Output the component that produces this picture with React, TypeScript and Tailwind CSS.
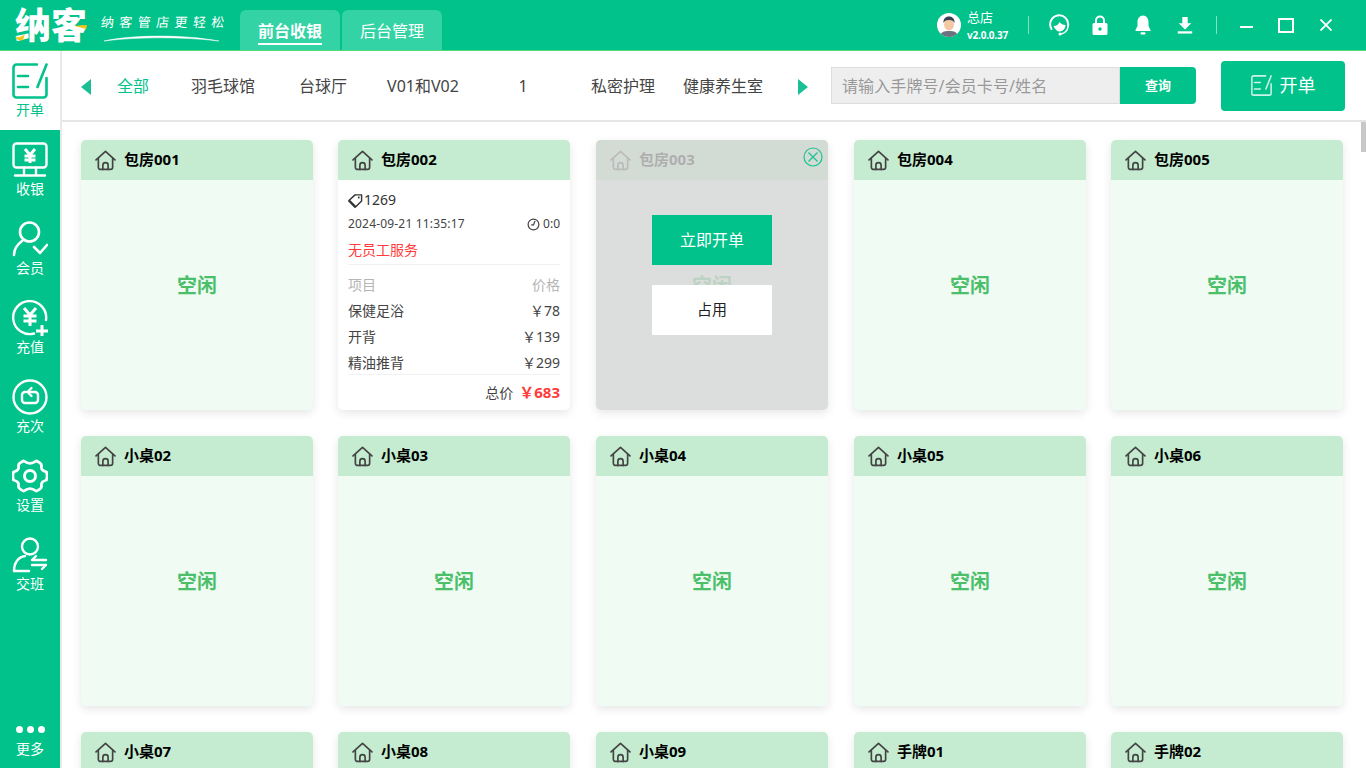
import React from "react";

const FONT = "font-['Noto_Sans','Noto_Sans_CJK_SC',sans-serif]";

function EditIcon({ className }: { className?: string }) {
  return (
    <svg viewBox="0 0 36 36" className={className} fill="none" stroke="currentColor" strokeWidth="2.6" strokeLinecap="round" strokeLinejoin="round">
      <path d="M25 1.500H4.500a3 3 0 0 0-3 3v27a3 3 0 0 0 3 3h27a3 3 0 0 0 3-3V15" />
      <path d="M34.500 1.500L25.500 24" />
      <path d="M6 13h10M6 24h10" />
    </svg>
  );
}

function Monitor() {
  return (
    <svg viewBox="0 0 36 36" className="w-[36px] h-[36px]" fill="none" stroke="white" strokeWidth="2.400" strokeLinecap="round" strokeLinejoin="round">
      <rect x="1.500" y="1.500" width="33" height="24" rx="3" />
      <path d="M12 25.500v7M24 25.500v7M3 33.500h30" />
      <path d="M13 7l5 6 5-6M12.500 14h11M12.500 18h11M18 13v8" strokeWidth="3" strokeLinecap="butt" strokeLinejoin="miter" />
    </svg>
  );
}

function Member() {
  return (
    <svg viewBox="0 0 36 36" className="w-[36px] h-[36px]" fill="none" stroke="white" strokeWidth="2.600" strokeLinecap="round" strokeLinejoin="round">
      <circle cx="17.500" cy="11" r="9.500" />
      <path d="M2 34c0-7 4-11 8-14" />
      <path d="M22 26l6 6 7-8" />
    </svg>
  );
}

function Recharge() {
  return (
    <svg viewBox="0 0 36 36" className="w-[36px] h-[36px]" fill="none" stroke="white" strokeWidth="2.400" strokeLinecap="round" strokeLinejoin="round">
      <path d="M22 33.500A16.500 16.500 0 1 1 34 20" />
      <path d="M12 8l6 7 6-7M11.500 16h13M11.500 21h13M18 15v11" strokeWidth="3" strokeLinecap="butt" strokeLinejoin="miter" />
      <path d="M24 31h12M30 25v11" strokeWidth="3" strokeLinecap="butt" />
    </svg>
  );
}

function Recount() {
  return (
    <svg viewBox="0 0 36 36" className="w-[36px] h-[36px]" fill="none" stroke="white" strokeWidth="2.400" strokeLinecap="round" strokeLinejoin="round">
      <circle cx="18" cy="18" r="16.500" />
      <path d="M14 13h-1a3 3 0 0 0-3 3v5a3 3 0 0 0 3 3h10a3 3 0 0 0 3-3v-5a3 3 0 0 0-3-3h-5" />
      <path d="M19.500 9l-4 4 4 4" />
    </svg>
  );
}

function Gear() {
  return (
    <svg viewBox="0 0 36 36" className="w-[36px] h-[36px]" fill="none" stroke="white" strokeWidth="2.800" strokeLinejoin="round">
      <path d="M12 3c2 1.600 3.800 2.400 6 2.400S22 4.600 24 3c1.200 0 4.400 2 5.200 3.400.8 1.700-.6 3.400 1 5.300 1.100 1.200 2.200 1.700 4.300 2.300.6 2 .6 6 0 8-2.100.6-3.200 1.100-4.300 2.300-1.600 1.900-.2 3.600-1 5.300C28.400 31 25.200 33 24 33c-2-1.600-3.800-2.400-6-2.400s-4 .8-6 2.400c-1.200 0-4.400-2-5.200-3.400-.8-1.700.6-3.400-1-5.300C4.700 23.100 3.600 22.600 1.500 22c-.6-2-.6-6 0-8 2.100-.6 3.200-1.100 4.300-2.300 1.600-1.900.2-3.600 1-5.300C7.600 5 10.800 3 12 3z" />
      <circle cx="18" cy="18" r="5.500" strokeWidth="3" />
    </svg>
  );
}

function Shift() {
  return (
    <svg viewBox="0 0 36 36" className="w-[36px] h-[36px]" fill="none" stroke="white" strokeWidth="2.400" strokeLinecap="round" strokeLinejoin="round">
      <circle cx="18" cy="9.500" r="8" />
      <path d="M2 34c0-8 4-14 11-15" />
      <path d="M2 34h15" />
      <path d="M24 18l-4 4h14M20 27h14l-4 4" transform="translate(0 1)" />
    </svg>
  );
}

function House() {
  return (
    <svg viewBox="0 0 20 20" className="w-[21px] h-[21px] shrink-0" fill="none" stroke="#444" strokeWidth="1.600" strokeLinecap="round" strokeLinejoin="round">
      <path d="M1 9.500L10 1.200l9 8.300" />
      <path d="M3.200 8.200v8.300a2 2 0 0 0 2 2h9.600a2 2 0 0 0 2-2V8.200" />
      <path d="M7.500 18.500v-4a2.500 2.500 0 0 1 5 0v4" />
    </svg>
  );
}

function Tag() {
  return (
    <svg viewBox="0 0 16 16" className="w-[15px] h-[15px]" fill="none" stroke="#333" strokeWidth="1.500" strokeLinejoin="round">
      <path d="M1 8l6.500-6H14.500v6.500L8 15z" fill="#fff" />
      <path d="M1 8l7 7" strokeWidth="2.500" />
      <circle cx="11.500" cy="4.800" r="1" fill="#333" stroke="none" />
    </svg>
  );
}

function Clock() {
  return (
    <svg viewBox="0 0 14 14" className="w-[13px] h-[13px]" fill="none" stroke="#444" strokeWidth="1.300" strokeLinecap="round">
      <circle cx="7" cy="7" r="5.800" />
      <path d="M8.500 3.500L7 7.500H5" />
    </svg>
  );
}

function SideItem({ icon, label, active }: { icon: React.ReactNode; label: string; active?: boolean }) {
  return (
    <div className={`h-[79px] shrink-0 flex flex-col items-center justify-start pt-[11px] ${active ? "bg-white text-[#00c28a] w-[60px]" : "text-white"}`}>
      <div className="h-[37px] w-[36px] flex items-center justify-center">{icon}</div>
      <div className="text-[14px] leading-[18px] mt-[2px]">{label}</div>
    </div>
  );
}

function Sidebar() {
  return (
    <aside className="w-[60px] shrink-0 bg-[#00c28a] flex flex-col">
      <SideItem active icon={<EditIcon className="w-[36px] h-[36px]" />} label="开单" />
      <SideItem icon={<Monitor />} label="收银" />
      <SideItem icon={<Member />} label="会员" />
      <SideItem icon={<Recharge />} label="充值" />
      <SideItem icon={<Recount />} label="充次" />
      <SideItem icon={<Gear />} label="设置" />
      <SideItem icon={<Shift />} label="交班" />
      <div className="mt-auto h-[47px] flex flex-col items-center text-white">
        <div className="flex gap-[4px] mt-[5px]">
          <span className="w-[7px] h-[7px] rounded-full bg-white" />
          <span className="w-[7px] h-[7px] rounded-full bg-white" />
          <span className="w-[7px] h-[7px] rounded-full bg-white" />
        </div>
        <div className="text-[14px] leading-[18px] mt-[7px]">更多</div>
      </div>
    </aside>
  );
}

function TopBar() {
  return (
    <header className="h-[51px] shrink-0 bg-[#00c28a] border-b border-[#4fd97f] flex items-stretch text-white">
      <div className="w-[240px] shrink-0 flex items-center pl-[15px]">
        <div className="relative w-[72px] h-[36px] flex items-center mt-[2px]">
          <span className="text-[36px] leading-none font-black whitespace-nowrap">纳客</span>
          <svg viewBox="0 0 72 36" className="absolute left-0 top-0 w-[72px] h-[36px]" fill="none">
            <path d="M0 29c4 1 8-1 10-3l-2 6c-3 1-6 0-8-3z" fill="#f5c518" />
            <path d="M60 18c4-.5 8-1 12-1l-1 4c-4-1-7-2-11-3z" fill="#f5c518" />
          </svg>
        </div>
        <div className="relative ml-[14px] w-[126px] h-[36px]">
          <span className="absolute left-0 top-[6px] text-[13px] leading-[18px] tracking-[5.400px] -skew-x-6 whitespace-nowrap">纳客管店更轻松</span>
          <svg viewBox="0 0 126 12" className="absolute left-0 top-[25px] w-[126px] h-[12px]" fill="none">
            <path d="M3 9C30 3 80 2 118 9C80 4.500 35 5 3 9z" fill="white" stroke="white" strokeWidth="0.500" />
          </svg>
        </div>
      </div>
      <div className="flex items-end gap-[2px] pt-[10px]">
        <div className="w-[100px] h-[40px] rounded-t-[6px] bg-[#33d3a5] flex flex-col items-center pt-[9px]">
          <span className="text-[16px] leading-[24px] font-bold border-b-2 border-white h-[26px]">前台收银</span>
        </div>
        <div className="w-[100px] h-[40px] rounded-t-[6px] bg-[#33d3a5] flex flex-col items-center pt-[9px]">
          <span className="text-[16px] leading-[24px]">后台管理</span>
        </div>
      </div>
      <div className="ml-auto flex items-center pr-[34px]">
        <svg viewBox="0 0 24 24" className="w-[24px] h-[24px] mr-[6px]">
          <circle cx="12" cy="12" r="12" fill="#fff" />
          <clipPath id="av"><circle cx="12" cy="12" r="12" /></clipPath>
          <g clipPath="url(#av)">
            <path d="M3 24c0-5 4-6 9-6s9 1 9 6z" fill="#6b7280" />
            <ellipse cx="12" cy="11.500" rx="5" ry="6" fill="#f3c9a5" />
            <path d="M6.500 10c-.5-5 3-6.500 5.500-6.500S18 5 17.500 10c-1-2-2-3-5.500-3s-4.500 1-5.500 3z" fill="#374151" />
          </g>
        </svg>
        <div className="flex flex-col w-[61px] pt-[1px]">
          <span className="text-[13px] leading-[15px]">总店</span>
          <span className="text-[10px] leading-[14px] font-bold mt-[3px] tracking-[-0.2px] whitespace-nowrap">v2.0.0.37</span>
        </div>
        <span className="w-px h-[18px] bg-white/50" />
        <svg viewBox="0 0 20 22" className="w-[21px] h-[22px] ml-[20px]" fill="none" stroke="white">
          <path d="M2 15a9 9 0 1 1 16.500-3" strokeWidth="2" strokeLinecap="round" />
          <path d="M4 12c3 0 5-1.500 6-4 1.500 2 3.500 3 6 3 0 3.500-2.500 6.500-6 6.500-2.500 0-4.500-2-6-5.500z" fill="white" stroke="none" />
          <path d="M18.500 13c-.5 3.500-3 6-7 7" strokeWidth="1.500" strokeLinecap="round" />
          <circle cx="10.500" cy="20" r="1.500" fill="white" stroke="none" />
        </svg>
        <svg viewBox="0 0 16 20" className="w-[16px] h-[20px] ml-[22px]" fill="none">
          <path d="M4 9V5.500a4 4 0 0 1 8 0V9" stroke="white" strokeWidth="2" />
          <rect x="0.500" y="8" width="15" height="12" rx="1.500" fill="white" />
          <circle cx="8" cy="14" r="1.700" fill="#00c28a" />
        </svg>
        <svg viewBox="0 0 16 20" className="w-[16px] h-[20px] ml-[27px]" fill="white">
          <path d="M8 0.500c-3.500 0-5.500 3-5.500 6.500v4L0.500 15v1h15v-1l-2-4V7c0-3.500-2-6.500-5.500-6.500z" />
          <rect x="5.500" y="17.300" width="5" height="2.200" rx="1" />
        </svg>
        <svg viewBox="0 0 16 20" className="w-[16px] h-[18px] ml-[26px]" fill="white">
          <path d="M5 1h6v7h4l-7 7-7-7h4z" />
          <rect x="0" y="17" width="16" height="2.500" />
        </svg>
        <span className="w-px h-[18px] bg-white/50 ml-[23px]" />
        <span className="w-[13px] h-[2px] bg-white ml-[23px] mt-[4px]" />
        <span className="w-[16px] h-[15px] border-2 border-white ml-[25px]" />
        <svg viewBox="0 0 12 12" className="w-[12px] h-[12px] ml-[26px]" stroke="white" strokeWidth="1.800">
          <path d="M0.500 0.500l11 11M11.500 0.500l-11 11" />
        </svg>
      </div>
    </header>
  );
}

function Toolbar() {
  const tabs = ["全部", "羽毛球馆", "台球厅", "V01和V02", "1", "私密护理", "健康养生室"];
  return (
    <div className="h-[71px] shrink-0 border-b-2 border-[#e5e5e5] flex items-center pl-[19px]">
      <svg viewBox="0 0 10 16" className="w-[10px] h-[16px] shrink-0 mt-[3px]"><path d="M10 0v16L0 8z" fill="#1abf93" /></svg>
      <div className="flex ml-[2px] mt-[1px] shrink-0">
        {tabs.map((t, i) => (
          <div key={t} className={`text-center text-[16px] leading-[24px] ${i === 0 ? "w-[80px] text-[#00c28a]" : "w-[100px] text-[#444]"}`}>{t}</div>
        ))}
      </div>
      <svg viewBox="0 0 10 16" className="w-[10px] h-[16px] shrink-0 ml-[25px] mt-[3px]"><path d="M0 0v16l10-8z" fill="#1abf93" /></svg>
      <div className="ml-[23px] w-[289px] shrink-0 h-[37px] bg-[#eeeeee] border border-[#dddddd] flex items-center pl-[10px] text-[16px] tracking-[0.1px] text-[#999]">请输入手牌号/会员卡号/姓名</div>
      <div className="w-[76px] shrink-0 h-[37px] bg-[#00c28a] rounded-r-[4px] flex items-center justify-center text-white text-[13px] font-bold">查询</div>
      <div className="ml-[25px] w-[124px] shrink-0 h-[50px] bg-[#00c28a] rounded-[4px] flex items-center justify-center gap-[8px] text-white text-[18px]">
        <EditIcon className="w-[21px] h-[21px] text-white/80" />
        <span>开单</span>
      </div>
    </div>
  );
}

function CardHeader({ name }: { name: string }) {
  return (
    <div className="h-[40px] bg-[#c5ecd0] flex items-center pl-[14px] gap-[8px]">
      <House />
      <span className="text-[15px] leading-[22px] mb-[2px] font-bold text-black whitespace-nowrap">{name}</span>
    </div>
  );
}

function Row({ left, right, muted }: { left: string; right: string; muted?: boolean }) {
  return (
    <div className={`h-[26px] pb-[2px] flex justify-between items-center text-[14px] ${muted ? "text-[#b5b5b5]" : "text-[#444]"}`}>
      <span>{left}</span>
      <span>{right}</span>
    </div>
  );
}

function BusyBody() {
  return (
    <div className="flex-1 bg-white px-[10px] flex flex-col">
      <div className="h-[24px] mt-[8px] flex items-center gap-px text-[14px] leading-[20px] text-[#333]">
        <Tag />
        <span>1269</span>
      </div>
      <div className="h-[24px] flex justify-between items-center text-[12px] text-[#444]">
        <span className="tracking-[0.18px]">2024-09-21 11:35:17</span>
        <span className="flex items-center gap-[3px]"><Clock />0:0</span>
      </div>
      <div className="h-[29px] pb-[1px] flex items-center text-[14px] text-[#ff3b3b] border-b border-[#f2f2f2]">无员工服务</div>
      <div className="h-[7px]" />
      <Row muted left="项目" right="价格" />
      <Row left="保健足浴" right="￥78" />
      <Row left="开背" right="￥139" />
      <div className="h-[25px] flex justify-between items-center text-[14px] text-[#444] border-b border-[#f2f2f2]">
        <span>精油推背</span>
        <span>￥299</span>
      </div>
      <div className="flex-1 flex items-center justify-end gap-[6px] pb-[1px]">
        <span className="text-[14px] text-[#444]">总价</span>
        <span className="text-[15px] font-bold text-[#ff3b3b]">￥683</span>
      </div>
    </div>
  );
}

function Card({ name, busy, overlay }: { name: string; busy?: boolean; overlay?: boolean }) {
  return (
    <div className="relative w-[232px] h-[270px] rounded-[5px] overflow-hidden flex flex-col bg-[#f0fbf4] shadow-[0_3px_10px_rgba(0,0,0,0.10)]">
      <CardHeader name={name} />
      {busy ? (
        <BusyBody />
      ) : (
        <div className="flex-1 flex items-center justify-center text-[20px] font-bold text-[#4cbf6b] pb-[18px]">空闲</div>
      )}
      {overlay && (
        <div className="absolute inset-0 bg-[rgba(214,214,214,0.81)] flex flex-col items-center pt-[75px]">
          <div className="w-[120px] h-[50px] bg-[#00c28a] text-white text-[16px] flex items-center justify-center">立即开单</div>
          <div className="w-[120px] h-[50px] bg-white text-[#222] text-[15px] flex items-center justify-center mt-[20px] pb-[1px]">占用</div>
          <svg viewBox="0 0 20 20" className="absolute right-[5px] top-[7px] w-[20px] h-[20px]" fill="none" stroke="#17c294" strokeWidth="1.200">
            <circle cx="10" cy="10" r="9" />
            <path d="M5.500 5.500l9 9M14.500 5.500l-9 9" />
          </svg>
        </div>
      )}
    </div>
  );
}

export default function App() {
  const rooms = ["包房001", "包房002", "包房003", "包房004", "包房005", "小桌02", "小桌03", "小桌04", "小桌05", "小桌06", "小桌07", "小桌08", "小桌09", "手牌01", "手牌02"];
  return (
    <div className={`${FONT} w-full h-screen overflow-hidden flex flex-col bg-white`}>
      <TopBar />
      <div className="flex-1 flex min-h-0">
        <Sidebar />
        <div className="flex-1 flex flex-col min-w-0 border-l-2 border-[#e9e9e9]">
          <Toolbar />
          <div className="relative flex-1 min-h-0 overflow-hidden">
            <div className="grid grid-cols-[257px_258px_258px_257px_232px] gap-y-[26px] pl-[19px] pt-[18px]">
              {rooms.map((r) => (
                <Card key={r} name={r} busy={r === "包房002"} overlay={r === "包房003"} />
              ))}
            </div>
            <div className="absolute right-0 top-0 w-[5px] h-[30px] bg-[#c8c8c8]" />
          </div>
        </div>
      </div>
    </div>
  );
}
